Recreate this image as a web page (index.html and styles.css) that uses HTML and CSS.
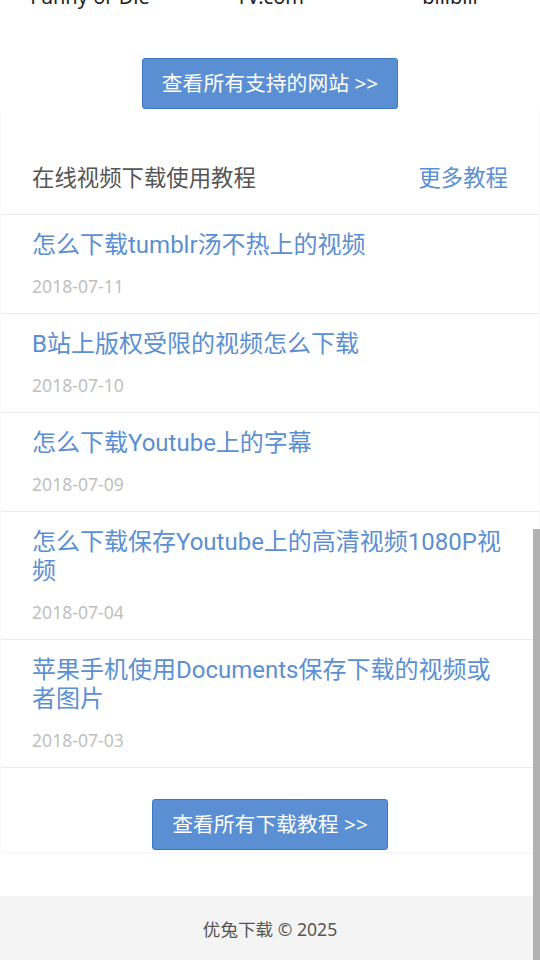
FILE: index.html
```html
<!DOCTYPE html>
<html lang="zh-CN">

<head>
    <meta charset="UTF-8">
    <meta name="viewport" content="width=device-width, initial-scale=1.0">
    <title>优兔下载</title>
    <link rel="stylesheet" href="styles.css">
</head>

<body>
    <div class="sites">
        <span>Funny or Die</span>
        <span>TV.com</span>
        <span>bilibili</span>
    </div>

    <div class="more-sites">
        <a class="btn" href="#">查看所有支持的网站 &gt;&gt;</a>
    </div>

    <section class="card">
        <div class="card-head">
            <h2>在线视频下载使用教程</h2>
            <a href="#">更多教程</a>
        </div>

        <ul class="posts">
            <li>
                <a href="#">怎么下载tumblr汤不热上的视频</a>
                <span class="date">2018-07-11</span>
            </li>
            <li>
                <a href="#">B站上版权受限的视频怎么下载</a>
                <span class="date">2018-07-10</span>
            </li>
            <li>
                <a href="#">怎么下载Youtube上的字幕</a>
                <span class="date">2018-07-09</span>
            </li>
            <li>
                <a href="#">怎么下载保存Youtube上的高清视频1080P视频</a>
                <span class="date">2018-07-04</span>
            </li>
            <li>
                <a href="#">苹果手机使用Documents保存下载的视频或者图片</a>
                <span class="date">2018-07-03</span>
            </li>
        </ul>

        <div class="more-posts">
            <a class="btn" href="#">查看所有下载教程 &gt;&gt;</a>
        </div>
    </section>

    <footer>优兔下载 © 2025</footer>

    <!-- page scrollbar thumb -->
    <div class="scrollbar"></div>
</body>

</html>
```

FILE: styles.css
```css
body {
    margin: 0;
    font-family: "Noto Sans", "Noto Sans CJK SC", sans-serif;
    background-color: #fff;
    color: #333;
}

a {
    text-decoration: none;
}

.sites {
    display: grid;
    grid-template-columns: repeat(3, 180px);
    margin-top: -17px;
    font-size: 20px;
    line-height: 28px;
    color: #222;
    text-align: center;
}

.more-sites {
    display: flex;
    justify-content: center;
    margin-top: 47px;
}

.btn {
    display: inline-block;
    padding: 11px 19px;
    font-size: 20.8px;
    line-height: 27px;
    color: #fff;
    background-color: #5b8fd3;
    border: 1px solid #3f76c4;
    border-radius: 3px;
}

.card {
    margin: 0 1px;
    background-color: #fff;
    border-radius: 0 0 4px 4px;
    box-shadow: 0 1px 3px rgba(0, 0, 0, 0.06);
}

.card-head {
    display: flex;
    justify-content: space-between;
    align-items: center;
    padding: 54px 31px 21px 31px;
    border-bottom: 1px solid #ebebeb;
}

.card-head h2 {
    margin: 0;
    font-size: 22.4px;
    font-weight: normal;
    line-height: 30px;
    color: #555;
}

.card-head a {
    font-size: 22.4px;
    line-height: 30px;
    color: #5b8fd3;
}

.posts {
    list-style: none;
    margin: 0;
    padding: 0;
}

.posts li {
    display: flex;
    flex-direction: column;
    padding: 16px 31px 16px 31px;
    border-bottom: 1px solid #ebebeb;
}

.posts li a {
    font-family: Roboto, "Noto Sans CJK SC", sans-serif;
    font-size: 24px;
    line-height: 29px;
    color: #5b8fd3;
}

.posts .date {
    margin-top: 15px;
    font-size: 17.6px;
    line-height: 22px;
    color: #c0c0c0;
}

.more-posts {
    display: flex;
    justify-content: center;
    padding: 31px 0 2px 0;
}

footer {
    margin-top: 44px;
    padding: 21px 0 19px 0;
    background-color: #f4f4f4;
    text-align: center;
    font-size: 17.6px;
    line-height: 24px;
    color: #555;
}

.scrollbar {
    position: fixed;
    right: 0;
    top: 529px;
    width: 7px;
    height: 431px;
    background-color: #b2b2b2;
}
```
